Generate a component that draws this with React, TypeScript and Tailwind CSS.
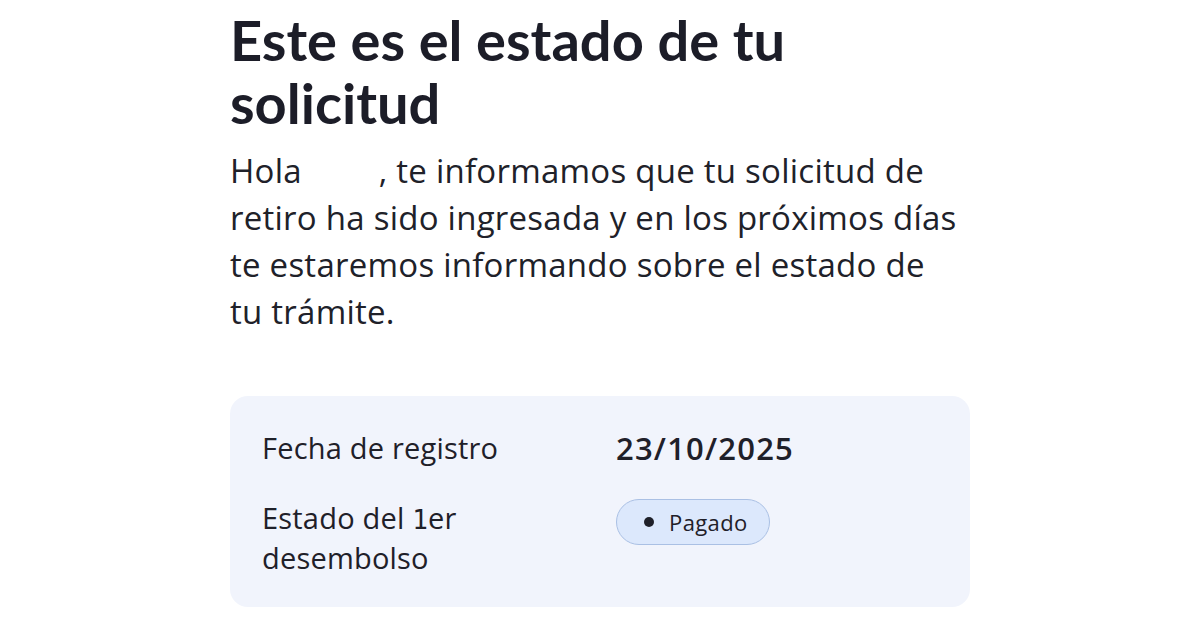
export default function App() {
    return (
        <div className="min-h-[630px] w-[1200px] bg-white text-[#1c1d28] overflow-hidden">
            <div className="mx-auto w-[740px] pt-[8px]">
                <h1 className="font-['Lato',sans-serif] font-bold text-[56px] leading-[63px]">
                    Este es el estado de tu
                    <br />
                    solicitud
                </h1>
                <p className="mt-[13px] font-['Open_Sans',sans-serif] text-[33px] leading-[47px] text-[#202129] tracking-[0.25px]">
                    Hola <span className="inline-block w-[68px]" />, te informamos que tu solicitud de
                    <br />
                    retiro ha sido ingresada y en los próximos días
                    <br />
                    te estaremos informando sobre el estado de
                    <br />
                    tu trámite.
                </p>

                <section className="mt-[61px] rounded-[18px] bg-[#f1f4fc] pl-[32px] pr-6 pt-[32px] pb-[31px] font-['Open_Sans',sans-serif] text-[#1f2029]">
                    <div className="grid grid-cols-[354px_1fr] gap-y-[31px]">
                        <div className="text-[29px] leading-[40px] tracking-[0.2px]">Fecha de registro</div>
                        <div className="text-[31px] leading-[40px] font-semibold tracking-[1.2px]">23/10/2025</div>

                        <div className="text-[29px] leading-[37px] tracking-[0.2px]">
                            Estado del <span className="font-['DejaVu_Sans_Mono',monospace] text-[26px]">1</span>er
                            <br />
                            desembolso
                        </div>
                        <div>
                            <span className="inline-flex items-center gap-[15px] rounded-full border border-[#aac0e4] bg-[#dce8fc] pl-[27px] pr-[21px] h-[46px] text-[22px] font-medium tracking-[0.4px]">
                                <span className="size-[10px] rounded-full bg-[#1f2029]" />
                                Pagado
                            </span>
                        </div>
                    </div>
                </section>
            </div>
        </div>
    );
}
